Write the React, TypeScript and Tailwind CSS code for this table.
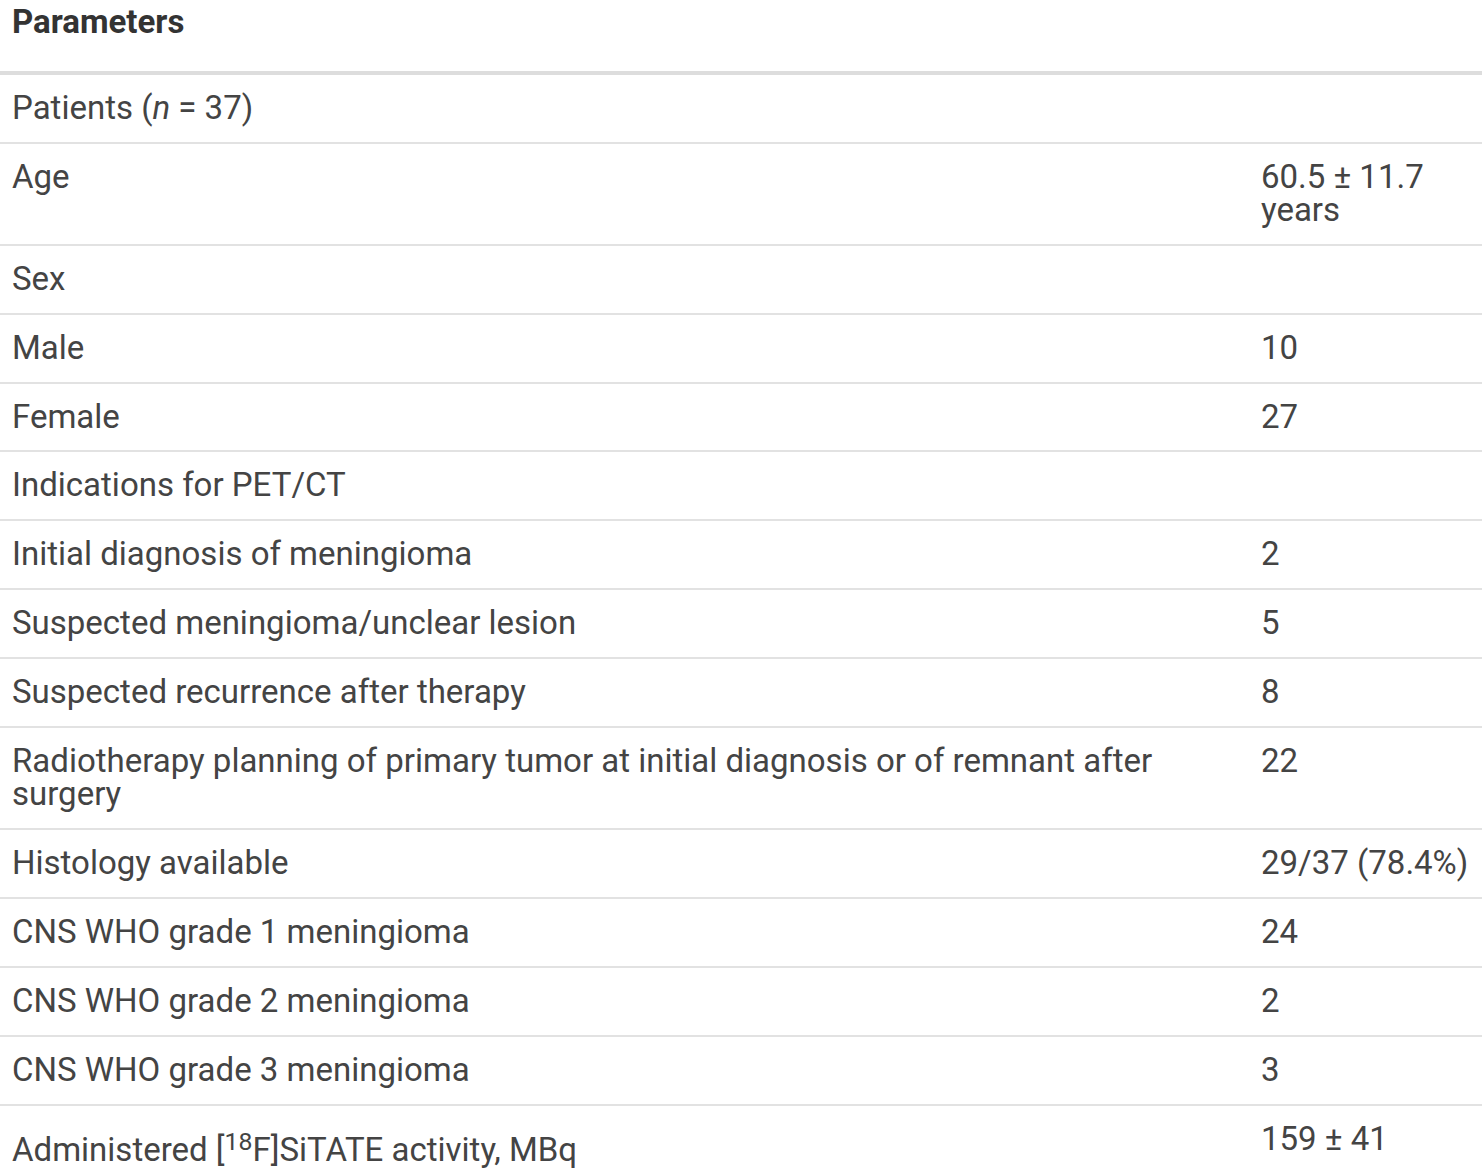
const rows: { label: React.ReactNode; value: React.ReactNode }[] = [
  { label: <>Patients (<i>n</i> = 37)</>, value: "" },
  { label: "Age", value: "60.5 ± 11.7 years" },
  { label: "Sex", value: "" },
  { label: "Male", value: "10" },
  { label: "Female", value: "27" },
  { label: "Indications for PET/CT", value: "" },
  { label: "Initial diagnosis of meningioma", value: "2" },
  { label: "Suspected meningioma/unclear lesion", value: "5" },
  { label: "Suspected recurrence after therapy", value: "8" },
  {
    label: "Radiotherapy planning of primary tumor at initial diagnosis or of remnant after surgery",
    value: "22",
  },
  { label: "Histology available", value: "29/37 (78.4%)" },
  { label: "CNS WHO grade 1 meningioma", value: "24" },
  { label: "CNS WHO grade 2 meningioma", value: "2" },
  { label: "CNS WHO grade 3 meningioma", value: "3" },
  {
    label: (
      <>
        Administered [<span className="align-[11px] text-[0.75em] leading-normal">18</span>F]SiTATE activity, MBq
      </>
    ),
    value: "159 ± 41",
  },
];

export default function App() {
  return (
    <div className="min-h-screen bg-white font-['Roboto',sans-serif] text-[#444]">
      <table className="w-full border-collapse table-fixed">
        <colgroup>
          <col />
          <col className="w-[233px]" />
        </colgroup>
        <thead>
          <tr className="border-b-4 border-[#dddddd]">
            <th className="h-[73px] px-3 pt-1 text-left align-top text-[33px] leading-[35px] font-bold text-[#333]">
              Parameters
            </th>
            <th className="px-3 align-top"></th>
          </tr>
        </thead>
        <tbody>
          {rows.map((r, i) => (
            <tr key={i} className="border-b-2 border-[#e2e2e2]">
              <td className="px-3 py-[17px] align-top text-[33px] leading-[32.9px]">{r.label}</td>
              <td className="px-3 py-[17px] align-top text-[33px] leading-[32.9px]">{r.value}</td>
            </tr>
          ))}
        </tbody>
      </table>
    </div>
  );
}
